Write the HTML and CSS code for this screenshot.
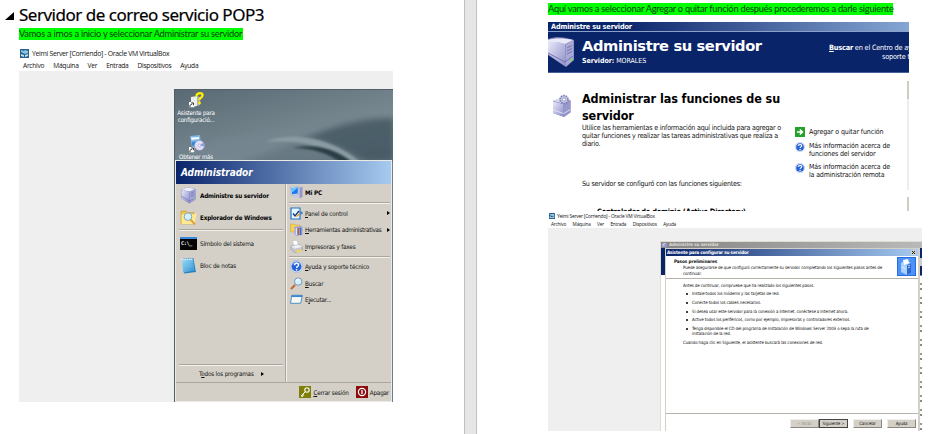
FILE: index.html
```html
<!DOCTYPE html>
<html lang="es">
<head>
<meta charset="utf-8">
<title>Servidor de correo servicio POP3</title>
<link rel="stylesheet" href="styles.css">
</head>
<body>
<svg class="defs" width="0" height="0" aria-hidden="true">
  <defs>
    <linearGradient id="gTower" x1="0" y1="0" x2="1" y2="1"><stop offset="0" stop-color="#e9e9fa"/><stop offset="1" stop-color="#8e8fc8"/></linearGradient>
    <linearGradient id="gNote" x1="0" y1="0" x2="1" y2="1"><stop offset="0" stop-color="#a5e0f8"/><stop offset="1" stop-color="#2a8fd0"/></linearGradient>
    <linearGradient id="gSwoosh" x1="0" y1="0" x2="1" y2="1"><stop offset="0" stop-color="#51636c"/><stop offset="1" stop-color="#495b65"/></linearGradient>
    <filter id="soft"><feGaussianBlur stdDeviation="3"/></filter>
    <filter id="soft1"><feGaussianBlur stdDeviation="1"/></filter>
    <symbol id="tower" viewBox="0 0 16 18">
      <path d="M0 3 7 0.3 15.5 2v11.5L9 17.5 0 12z" fill="#8586bd"/>
      <path d="M0.5 3 7 .6 15 2.2 9 4.8z" fill="#eeeefb"/>
      <path d="M.5 3.3 8.8 5v12L.5 11.8z" fill="url(#gTower)"/>
      <path d="M9.3 5 15.2 2.7v10.6l-5.9 3.5z" fill="#a6a7dc"/>
      <path d="M10.3 6.5 14.3 5M10.3 8.5l4-1.6M10.3 10.5l4-1.7M.5 9.8 9 14.8l6-3.3" stroke="#6c6eae" stroke-width=".7" fill="none"/>
      <circle cx="13.8" cy="12.2" r=".7" fill="#6fe04c"/>
    </symbol>
    <symbol id="explorer" viewBox="0 0 16 16">
      <path d="M1 2h5l1.5 1.5H13V14H1z" fill="#f2c74b" stroke="#c89420" stroke-width=".6"/>
      <path d="M1.5 5H13l2.7-1-2 10H1.5z" fill="#ffe991"/>
      <circle cx="7.5" cy="7.2" r="3.6" fill="#d5f2fb" stroke="#78a7bd" stroke-width=".9"/>
      <path d="m10 10 4 4.5" stroke="#e09a32" stroke-width="1.8"/>
    </symbol>
    <symbol id="notepad" viewBox="0 0 15 16">
      <path d="M2 1.5 12 1l2.5 13-11 1.5z" fill="#247eb9"/>
      <path d="M1 2 11.5 1.5 13.5 13 2.5 14.5z" fill="url(#gNote)"/>
      <path d="M1 2.2h10" stroke="#f1fbff" stroke-width="1.4" stroke-dasharray="1 .8"/>
      <path d="M3 5h7M3.2 7h7M3.4 9h7" stroke="#75c3eb" stroke-width=".5"/>
    </symbol>
    <symbol id="mypc" viewBox="0 0 13 13">
      <path d="M9 1.5 12.5 1v10L9 12.3z" fill="#9495ca"/><path d="M8 2l1.6-.5v10.3L8 11z" fill="#cbcbee"/>
      <path d="M.5 1.3 8.7.5v8L1.3 9.3z" fill="#dee2f5" stroke="#7c8ebd" stroke-width=".4"/>
      <path d="m1.5 2.2 6.3-.6v6L2 8.3z" fill="#1c78ef"/><path d="m1.5 2.2 6.3-.6-5.500 5z" fill="#63c8ff"/>
      <path d="m3 10 4-.5 1.300 1.700-4.500.5z" fill="#c3c9df"/>
    </symbol>
    <symbol id="panel" viewBox="0 0 13 13">
      <path d="M1 1h9v11H1z" fill="#eaf6ff" stroke="#2272c8" stroke-width="1.2"/>
      <path d="M3 6.5 5 9l4-5" stroke="#143a84" stroke-width="1.4" fill="none"/>
      <path d="m6.5 9.5 5-4" stroke="#e39c2c" stroke-width="1.4"/><circle cx="11.3" cy="6" r="1.4" fill="#3d82d2"/>
    </symbol>
    <symbol id="tools" viewBox="0 0 13 13">
      <path d="M.5 1h4l1 1H10v7H.5z" fill="#f4cf59" stroke="#c09430" stroke-width=".4"/>
      <path d="M4.5 4 11 3l1.500 1v8L6 12.800 4.500 11z" fill="#8f9fd5"/>
      <path d="M6.3 5v7" stroke="#e5ecff" stroke-width="1.2"/><path d="M8.3 5v7" stroke="#da4d2e" stroke-width="1.2"/><path d="M10.5 5v7" stroke="#3869bb" stroke-width="1.2"/>
    </symbol>
    <symbol id="printer" viewBox="0 0 13 13">
      <path d="M2.500.7 7 .3l1.500 5-4.500 1z" fill="#fff" stroke="#a8b0b8" stroke-width=".4"/>
      <path d="M.8 6 9 4.500l3.500 2.200v3.600L5 12.700.8 9.500z" fill="#c4c6cc" stroke="#85888f" stroke-width=".4"/>
      <path d="M1 6.200 9 4.800l3.200 2L5 8.800z" fill="#efeff3"/><path d="m5.500 11 5-1.500 1.800 1.200-5 1.800z" fill="#f8d94b"/>
    </symbol>
    <symbol id="help" viewBox="0 0 13 13">
      <circle cx="6.5" cy="6.5" r="6.1" fill="#e9effc" stroke="#8fa5d0" stroke-width=".5"/>
      <circle cx="6.5" cy="6.5" r="5" fill="#2461d7"/><path d="M2 5a4.900 4.900 0 0 1 9 0c-3-1.500-6-1.500-9 0z" fill="#5d95f2"/>
      <path d="M4.600 5.200c0-2.500 4-2.500 4-.3 0 1.500-2 1.500-2 3" stroke="#fff" stroke-width="1.4" fill="none"/><circle cx="6.6" cy="9.8" r=".9" fill="#fff"/>
    </symbol>
    <symbol id="search" viewBox="0 0 13 13">
      <path d="m5 8-4 4" stroke="#c36532" stroke-width="2"/><circle cx="8.2" cy="4.6" r="3.7" fill="#d2f2ff" stroke="#6f97bc" stroke-width="1"/><path d="M6 4a2.500 2.500 0 0 1 3.500-1.600" stroke="#fff" stroke-width="1" fill="none"/>
    </symbol>
    <symbol id="run" viewBox="0 0 13 10">
      <path d="M1.800.8h10.500l-1.600 8H.5z" fill="#eef8ff" stroke="#397ab9" stroke-width=".8"/><path d="M1.800.7h10.500L12 2.500H1.500z" fill="#3a86d4"/><path d="m3 4.500 5-.2-1 3H2.500z" fill="#fffbe0"/>
    </symbol>
    <symbol id="shortcut" viewBox="0 0 6 6"><path d="M0 0h6v6H0z" fill="#fff"/><path d="M1 5.500C1 3 2 2.500 3.300 2.500M2.500 1h2.300v2.500" stroke="#111" stroke-width="1" fill="none"/></symbol>
    <symbol id="vm" viewBox="0 0 9 9"><path d="M0 0h9v9H0z" fill="#26618f"/><path d="m1 1 3 1 1-1 3 1v2L5 5 1 3z" fill="#8dc6dc"/><path d="m1 5 3 1v2L1 7zm4 1 3-1v2L5 8z" fill="#c3e1ec"/></symbol>
    <symbol id="gearTower" viewBox="0 0 20 24">
      <path d="M1 7 9 4l9.500 2v12.500L12 23 1 19z" fill="#8081b4"/><path d="M1 7.500 11.500 10v12.500L1 19z" fill="url(#gTower)"/><path d="M1 7 9 4l9.500 2-7 3.500z" fill="#dadbf0"/><path d="M12 10 18.500 7v11L12 22.300z" fill="#9798cc"/>
      <path d="m1 16 10.500 3.500 7-4" stroke="#eef" stroke-width=".7" fill="none"/>
      <circle cx="12" cy="5.500" r="4" fill="#c4c7e8" stroke="#7779aa" stroke-width="1.500" stroke-dasharray="1.600 .9"/><circle cx="12" cy="5.500" r="1.600" fill="#fff" stroke="#7779aa" stroke-width=".6"/>
    </symbol>
  </defs>
</svg>
<main class="doc">
  <section class="page page-left">
    <h1><svg class="tri" viewBox="0 0 9 9"><path d="M9 0v8H0z"/></svg><span>Servidor de correo servicio POP3</span></h1>
    <p class="mark mark-a"><span>Vamos a irnos a inicio y seleccionar Administrar su servidor</span></p>
    <div class="vm vm-a">
      <div class="vm-title"><svg><use href="#vm"/></svg><span>Yeimi Server [Corriendo] - Oracle VM VirtualBox</span></div>
      <div class="vm-menu"><span>Archivo</span><span>Máquina</span><span>Ver</span><span>Entrada</span><span>Dispositivos</span><span>Ayuda</span></div>
      <div class="vm-screen">
        <div class="desktop">
          <svg class="wall" viewBox="0 0 219 72" preserveAspectRatio="none">
            <path d="M60 72C120 60 150 28 219 28V72z" fill="url(#gSwoosh)" filter="url(#soft)"/>
            <path d="M0 72C60 30 140 38 190 72z" fill="#74858f" filter="url(#soft)" opacity=".7"/>
            <path d="M90 52C120 40 160 50 185 72H172C150 54 120 50 90 52z" fill="#8b9ba4" filter="url(#soft1)"/>
            <path d="M118 58C145 53 165 62 177 72H165C152 63 138 58 118 58z" fill="#2b3c45" filter="url(#soft1)"/>
          </svg>
          <div class="shortcuts">
            <div class="short"><svg class="s-icon" viewBox="0 0 17 18"><path d="M3 6 9 5v10l-6 1z" fill="#eceee8"/><path d="M9 5l3 1v8l-3 1z" fill="#adb1a9"/><path d="M8.500 5.500C8 1.500 15 1 14.500 4.500 14.300 6.800 11.500 6.500 11.500 9" stroke="#ffee00" stroke-width="2.400" fill="none"/><circle cx="11.500" cy="12" r="1.400" fill="#ffee00"/><use href="#shortcut" x="1" y="11" width="5.500" height="5.500"/></svg><span>Asistente para<br>configuració...</span></div>
            <div class="short"><svg class="s-icon" viewBox="0 0 17 18"><path d="M2 1 12 0l1 9-9 3z" fill="#7db7e7"/><path d="M3 2.500 11 2v2L3.500 5z" fill="#f4faff"/><path d="m4 7 8-1v3L4 11z" fill="#358bd1"/><circle cx="11.500" cy="10.500" r="5" fill="#dfdff7" stroke="#8989b6" stroke-width=".5"/><path d="m11.500 10.500 4-3a5 5 0 0 1 .8 4z" fill="#8e9ae5"/><circle cx="11.500" cy="10.500" r="1.300" fill="#fff" stroke="#8989b6" stroke-width=".5"/><use href="#shortcut" x="1" y="12" width="5.500" height="5.500"/></svg><span>Obtener más</span></div>
          </div>
          <div class="start">
            <div class="user">Administrador</div>
            <div class="cols">
              <div class="col col-l">
                <div class="it big b"><svg><use href="#tower"/></svg><span>Administre su servidor</span></div>
                <div class="it big b"><svg><use href="#explorer"/></svg><span>Explorador de Windows</span></div>
                <hr>
                <div class="it big"><i class="cmd">C:\_</i><span>Símbolo del sistema</span></div>
                <div class="it big"><svg><use href="#notepad"/></svg><span>Bloc de notas</span></div>
                <div class="all"><hr><div class="allrow"><span>T<u>o</u>dos los programas</span><b class="arr"></b></div></div>
              </div>
              <div class="col col-r">
                <div class="it b mypc"><svg><use href="#mypc"/></svg><span>Mi PC</span></div>
                <hr>
                <div class="it"><svg><use href="#panel"/></svg><span><u>P</u>anel de control</span><b class="arr"></b></div>
                <div class="it"><svg><use href="#tools"/></svg><span class="herr"><u>H</u>erramientas administrativas</span><b class="arr"></b></div>
                <div class="it"><svg><use href="#printer"/></svg><span><u>I</u>mpresoras y faxes</span></div>
                <hr>
                <div class="it"><svg><use href="#help"/></svg><span><u>A</u>yuda y soporte técnico</span></div>
                <div class="it"><svg><use href="#search"/></svg><span><u>B</u>uscar</span></div>
                <div class="it"><svg><use href="#run"/></svg><span>E<u>j</u>ecutar...</span></div>
              </div>
            </div>
            <div class="power">
              <svg viewBox="0 0 12 12"><path d="M0 0h12v12H0z" fill="#7f7f08"/><circle cx="8" cy="4" r="2.200" fill="none" stroke="#fff" stroke-width="1.100"/><path d="M6.300 5.700 2 10l1.500.5L4 9l1-.2" stroke="#fff" fill="none"/></svg><span><u>C</u>errar sesión</span>
              <svg viewBox="0 0 12 12"><path d="M0 0h12v12H0z" fill="#8a0b10"/><circle cx="6" cy="6" r="3.600" fill="none" stroke="#fff" stroke-width="1.200"/><path d="M6 4v4" stroke="#fff" stroke-width="1.300"/></svg><span>Apa<u>g</u>ar</span>
            </div>
          </div>
        </div>
      </div>
    </div>
  </section>
  <div class="gutter"></div>
  <section class="page page-right">
    <p class="mark mark-b"><span>Aquí vamos a seleccionar Agregar o quitar función después procederemos a darle siguiente</span></p>
    <div class="manage">
      <div class="m-bar"><span>Administre su servidor</span></div>
      <div class="m-head">
        <svg class="m-tower" viewBox="0 0 27 31"><path d="M0 2C8-1 17 0 26 3v20l-8 7L0 18z" fill="#9192c4"/><path d="M0 3c6-2 15-2 25 0l-8 4C10 5 4 5 0 6z" fill="#eaebf8"/><path d="M0 5c6-.5 12 0 17 2v22L0 17z" fill="url(#gTower)"/><path d="m18 7 7-3.500V23l-7 6z" fill="#a8a9d5"/><path d="m19 11 5-2.500M19 14l5-2.500M19 17l5-2.500M0 16l17 9 8-6" stroke="#7374ae" fill="none"/><circle cx="23.500" cy="23" r="1.200" fill="#64e14c"/></svg>
        <div class="m-name"><strong>Administre su servidor</strong><span><b>Servidor:</b> MORALES</span></div>
        <div class="m-find"><div><b><u>B</u>uscar</b> en el Centro de ay</div><div>soporte té</div></div>
      </div>
      <div class="m-body">
        <svg class="m-gear"><use href="#gearTower"/></svg>
        <div class="m-text">
          <h2>Administrar las funciones de su<br>servidor</h2>
          <p>Utilice las herramientas e información aquí incluida para agregar o<br>quitar funciones y realizar las tareas administrativas que realiza a<br>diario.</p>
          <p class="roles">Su servidor se configuró con las funciones siguientes:</p>
          <div class="role"><span>Controlador de dominio (Active Directory)</span></div>
        </div>
        <div class="m-links">
          <div><svg viewBox="0 0 10 10"><path d="M0 0h10v10H0z" fill="#27a02d"/><path d="M2 5h5M4.800 2.500 7.500 5 4.800 7.500" stroke="#fff" stroke-width="1.500" fill="none"/></svg><span class="add">Agregar o quitar función</span></div>
          <div><svg><use href="#help"/></svg><span>Más información acerca de<br>funciones del servidor</span></div>
          <div><svg><use href="#help"/></svg><span>Más información acerca de<br>la administración remota</span></div>
        </div>
        <div class="m-scroll"><i></i><i></i></div>
      </div>
    </div>
    <div class="vm vm-b">
      <div class="vm-title"><svg><use href="#vm"/></svg><span>Yeimi Server [Corriendo] - Oracle VM VirtualBox</span></div>
      <div class="vm-menu"><span>Archivo</span><span>Máquina</span><span>Ver</span><span>Entrada</span><span>Dispositivos</span><span>Ayuda</span></div>
      <div class="vm-screen">
        <div class="back">
          <div class="back-bar"><svg><use href="#tower"/></svg><span>Administre su servidor</span></div>
          <div class="back-row">
            <div class="back-left"></div>
            <div class="wizard">
              <div class="w-bar"><span>Asistente para configurar su servidor</span><i><svg viewBox="0 0 5 5"><path d="m1 1 3 3M4 1 1 4" stroke="#111" stroke-width=".9"/></svg></i></div>
              <div class="w-head"><div><b>Pasos preliminares</b><p>Puede asegurarse de que configuró correctamente su servidor completando los siguientes pasos antes de<br>continuar.</p></div>
                <svg viewBox="0 0 19 19"><path d="M0 0h19v19H0z" fill="#286ce4"/><path d="M1 1h17v17H1z" fill="#4d92f7"/><path d="m4 6 5-3 5 3v10l-4 2-6-3z" fill="#a9d0ff"/><path d="m10 8 4-2v10l-4 2z" fill="#2d68d3"/><path d="m6 3 5-1 1 4-5 2z" fill="#fff"/><path d="m11 9 2-1m-2 3 2-1M5 10l4 2" stroke="#fff" stroke-width=".7"/></svg></div>
              <div class="w-body">
                <p>Antes de continuar, compruebe que ha realizado los siguientes pasos.</p>
                <ul><li>Instale todos los módems y las tarjetas de red.</li><li>Conecte todos los cables necesarios.</li><li>Si desea usar este servidor para la conexión a Internet, conéctese a Internet ahora.</li><li>Active todos los periféricos, como por ejemplo, impresoras y controladores externos.</li><li>Tenga disponible el CD del programa de instalación de Windows Server 2003 o sepa la ruta de<br>instalación de la red.</li></ul>
                <p class="next">Cuando haga clic en Siguiente, el asistente buscará las conexiones de red.</p>
              </div>
              <div class="w-foot"><span class="dis">&lt; Atrás</span><span class="def">Siguiente &gt;</span><span class="gap">Cancelar</span><span class="gap">Ayuda</span></div>
            </div>
            <div class="back-right"></div>
          </div>
        </div>
      </div>
    </div>
  </section>
</main>
</body>
</html>
```
FILE: styles.css
```css
* { box-sizing: border-box; }
body { margin: 0; background: #fff; color: #111; font-family: "DejaVu Sans Condensed", "DejaVu Sans", sans-serif; font-stretch: condensed; }
h1, h2, p, ul, hr { margin: 0; padding: 0; }
svg { display: block; flex: none; }
span { white-space: nowrap; }
.defs { position: absolute; }
.doc { display: grid; grid-template-columns: 464px 13px 453px; width: 930px; height: 434px; overflow: hidden; }
.gutter { background: #e6e6e6; border: solid #c0c0c0; border-width: 0 1px; }
.page-left { padding: 4px 0 0 5px; }
.page-right { padding: 3px 0 0 71px; }

h1 { display: flex; align-items: center; height: 22px; color: #000; font: 400 17px/22px "Noto Sans", "Open Sans", sans-serif; letter-spacing: -.49px; }
h1 span { margin-left: 5px; -webkit-text-stroke: .2px #000; }
.tri { width: 9px; height: 9px; margin-top: 2px; }
.mark { display: flex; width: max-content; height: 12px; background: #0f0; color: #0b3d0b; font: 400 9.3px/12px Lato, sans-serif; letter-spacing: -.255px; }
.mark-a { width: 224px; margin: 2px 0 7px 14px; }
.mark-b { width: 345px; margin-bottom: 7px; }

.vm-title { display: flex; align-items: center; font-family: "Open Sans", sans-serif; font-stretch: normal; }
.vm-menu { display: flex; font-family: "Open Sans", sans-serif; font-stretch: normal; }
.vm-screen { background: #efefef; }
.vm-a { width: 374px; margin-left: 14px; }
.vm-a .vm-title { height: 13px; font-size: 6.9px; letter-spacing: -.32px; }
.vm-a .vm-title svg { width: 9px; height: 9px; margin: 0 3px 0 1px; }
.vm-a .vm-menu { height: 11px; gap: 9px; padding-left: 4px; font-size: 6.6px; line-height: 11px; letter-spacing: -.25px; }
.vm-a .vm-screen { height: 331px; padding: 18px 0 0 155px; }

.desktop { position: relative; display: flex; flex-direction: column; height: 313px; background: linear-gradient(165deg, #596a74, #788992 80px, #6c7d87 150px); border: 1px solid #4f6069; border-width: 1px 0 0 1px; overflow: hidden; }
.wall { position: absolute; left: 0; top: 0; width: 219px; height: 72px; }
.shortcuts { position: relative; height: 70px; }
.short { width: 42px; height: 43px; color: #fff; font-size: 6.2px; line-height: 7px; letter-spacing: -.2px; text-align: center; }
.s-icon { width: 17px; height: 18px; margin: 1px auto 0; }
.start { position: relative; display: flex; flex-direction: column; flex: 1; margin: 0 1px 0 0; border: 1px solid #eceae5; background: #d4d0c8; }
.user { height: 23px; padding-left: 5px; color: #fff; background: linear-gradient(90deg, #0a246a, #a6caf0); font-size: 10px; line-height: 23px; font-weight: 700; font-style: italic; letter-spacing: -.05px; }
.cols { display: grid; grid-template-columns: 110px 1fr; height: 199px; border-bottom: 1px solid #aaa69e; }
.col { display: flex; flex-direction: column; font-size: 6.3px; letter-spacing: -.18px; }
.col-l { padding: 0 2px 0 3px; border-right: 1px solid #aaa69e; }
.col-r { padding: 0 1px 0 2px; border-left: 1px solid #f4f2ee; }
hr { flex: none; border: 0; border-top: 1px solid #aaa69e; border-bottom: 1px solid #f4f2ee; height: 2px; }
.it { display: flex; align-items: center; height: 16.5px; }
.it svg { width: 13px; height: 13px; margin: 0 2px 0 1px; }
.herr { letter-spacing: -.28px; }
.b { font-weight: 700; color: #000; }
.big { height: 22px; }
.big svg { width: 17px; height: 17px; margin: 0 3px 0 1px; }
.col-l > hr { margin: 1px 0; }
.col-r > hr { margin: 1px 0; }
.mypc { height: 17px; }
.cmd { width: 17px; height: 13px; margin: 0 3px 0 1px; background: #050505; border-top: 2px solid #3a87dc; color: #fff; font: 700 5px/9px "DejaVu Sans Mono", monospace; letter-spacing: -.3px; padding-left: 1px; }
.all { margin-top: auto; height: 18px; }
.allrow { display: flex; align-items: center; height: 15px; padding-left: 20px; }
.arr { width: 0; height: 0; border: 2px solid transparent; border-left: 3px solid #000; border-right: 0; margin-left: auto; }
.allrow .arr { margin-left: 7px; }
.power { display: flex; align-items: center; justify-content: flex-end; height: 18px; padding-right: 2px; font-size: 6.3px; letter-spacing: -.18px; }
.power svg { width: 12px; height: 12px; margin: 0 2px 0 7px; }

.manage { width: 361px; height: 189px; overflow: hidden; }
.m-bar { height: 10px; padding-left: 3px; background: linear-gradient(90deg, #0a246a 20%, #86a6d4); border-bottom: 1px solid #8ba0c8; color: #fff; font-size: 7.3px; line-height: 9px; font-weight: 700; letter-spacing: -.15px; }
.m-head { display: flex; height: 41px; color: #fff; background: #0a246a; border-bottom: 1px solid #45609a; }
.m-tower { width: 27px; height: 31px; margin-top: 5px; }
.m-name { display: flex; flex-direction: column; width: 254px; padding-left: 7px; font-size: 7px; letter-spacing: -.05px; }
.m-name strong { height: 22px; font: 700 14.7px/27px "DejaVu Sans", sans-serif; letter-spacing: -.4px; white-space: nowrap; }
.m-name span { line-height: 15px; }
.m-find { width: 80px; padding-top: 12px; font-size: 7.3px; line-height: 8.5px; letter-spacing: -.2px; white-space: nowrap; }
.m-find div + div { padding-left: 53px; }
.m-body { display: flex; height: 138px; }
.m-gear { width: 20px; height: 24px; margin: 21px 10px 0 4px; }
.m-text { width: 213px; padding-top: 18px; font-size: 7.1px; line-height: 8.2px; letter-spacing: -.22px; white-space: nowrap; }
h2 { color: #000; font: 700 12.5px/16.5px "DejaVu Sans Condensed", sans-serif; letter-spacing: -.08px; }
.roles { margin-top: 31px; }
.role { height: 24px; padding: 20.5px 0 0 15px; color: #000; font-weight: 700; font-size: 7.4px; }
.m-links { display: flex; flex-direction: column; width: 112px; padding-top: 54px; font-size: 7px; line-height: 8.2px; letter-spacing: -.15px; }
.m-links div { display: flex; height: 20.5px; }
.m-links div:first-child { height: 15px; }
.m-links svg { width: 10px; height: 10px; margin-right: 4px; }
.add { padding-top: 1px; letter-spacing: -.1px; }
.m-scroll { display: flex; flex-direction: column; justify-content: space-between; width: 2px; padding-top: 8px; }
.m-scroll i { width: 2px; height: 109px; background: linear-gradient(#d0ccc4 18px, #efede8 18px); }
.m-scroll i + i { height: 14px; background: #d0ccc4; }

.vm-b { width: 374px; }
.vm-b .vm-title { height: 9px; font-size: 4.9px; letter-spacing: -.22px; }
.vm-b .vm-title svg { width: 6px; height: 6px; margin: 0 2px 0 1px; }
.vm-b .vm-menu { height: 8px; gap: 6.5px; padding-left: 3px; font-size: 4.7px; line-height: 8px; letter-spacing: -.18px; }
.vm-b .vm-screen { height: 203px; padding: 13px 0 0 112px; }
.back { display: flex; flex-direction: column; height: 190px; border: 1px solid #dedbd5; border-width: 1px 0 0 1px; }
.back-bar { display: flex; align-items: center; height: 6px; background: linear-gradient(90deg, #858585, #b9b9b9); color: #dfdcd5; font-size: 4.6px; line-height: 6px; font-weight: 700; letter-spacing: -.15px; }
.back-bar svg { width: 5px; height: 5px; margin: 0 2px 0 1px; }
.back-row { display: grid; grid-template-columns: 4px 255px 2px; height: 183px; }
.back-left { background: linear-gradient(#0a246a 27px, #fff 27px); }
.back-right { background: linear-gradient(#0a246a 10px, #ccc 10px 18px, #0a246a 18px 27px, transparent 27px), repeating-linear-gradient(#fff 0 7px, #999 7px 9px, #fff 9px 12px, #888 12px 14px); }
.wizard { display: flex; flex-direction: column; border: solid #d4d0c8; border-width: 1px 2px 0 1px; background: #fff; font-size: 4.4px; line-height: 6px; letter-spacing: -.11px; }
.w-bar { display: flex; align-items: center; justify-content: space-between; height: 7px; padding: 0 2px 0 1px; background: linear-gradient(90deg, #0a246a, #a6caf0); color: #fff; font-weight: 700; font-size: 4.7px; letter-spacing: -.2px; }
.w-bar i { width: 5px; height: 5px; background: #d4d0c8; }
.w-bar svg { width: 5px; height: 5px; }
.w-head { display: flex; justify-content: space-between; height: 23px; padding: 1px 2px 0 8px; border-bottom: 1px solid #b6b3ad; }
.w-head > svg { width: 19px; height: 19px; }
.w-head b { display: block; height: 6px; margin-top: 2px; font-size: 4.7px; }
.w-head p { padding-left: 9px; line-height: 5.5px; white-space: nowrap; }
.w-body { height: 134px; padding: 4px 0 0 17px; white-space: nowrap; }
.w-body ul { list-style: none; padding-left: 9px; margin-top: 2px; line-height: 5.2px; }
.w-body li { position: relative; margin-bottom: 3.6px; }
.w-body li::before { content: ""; position: absolute; left: -6.5px; top: 2px; width: 2px; height: 2px; border-radius: 1px; background: #000; }
.w-foot { display: flex; justify-content: flex-end; border-top: 1px solid #b6b3ad; padding: 5px 2px 0 0; }
.w-foot span { width: 29px; height: 9px; background: #d4d0c8; border: 1px solid; border-color: #f1efeb #8a8781 #8a8781 #f1efeb; text-align: center; line-height: 7px; }
.w-foot .gap { margin-left: 5px; }
.w-foot .dis { color: #99968f; }
.w-foot .def { border-color: #444; }
```
